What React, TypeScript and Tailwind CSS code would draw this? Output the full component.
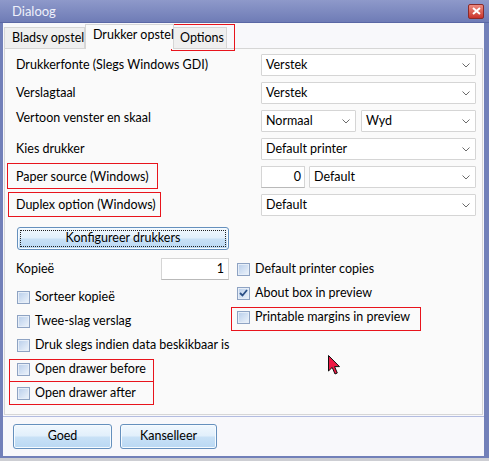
import { type ReactNode } from "react";

function Chevron() {
  return (
    <svg width="8" height="5" viewBox="0 0 8 5">
      <path d="M0.5 0.5 L4 4 L7.5 0.5" fill="none" stroke="#6b6b6b" strokeWidth="1" />
    </svg>
  );
}

function Combo({ value, className = "" }: { value: string; className?: string }) {
  return (
    <div
      className={`flex h-[22px] items-center justify-between rounded-[1px] border border-[#d5d5d5] bg-white pr-[5px] pl-[4px] ${className}`}
    >
      <span>{value}</span>
      <Chevron />
    </div>
  );
}

function Check({ checked = false }: { checked?: boolean }) {
  return (
    <span className="flex h-[13px] w-[13px] shrink-0 items-center justify-center border border-[#8ea3c3] bg-gradient-to-br from-[#b7cdea] to-[#eef4fb] shadow-[inset_0_0_0_1px_#e6eef8]">
      {checked && (
        <svg width="9" height="8" viewBox="0 0 9 8">
          <path d="M1 4 L3.5 6.5 L8 1" fill="none" stroke="#2a4f86" strokeWidth="1.8" />
        </svg>
      )}
    </span>
  );
}

function CheckRow({ label, checked, children }: { label: string; checked?: boolean; children?: ReactNode }) {
  return (
    <div className="relative flex h-[24px] items-center gap-[5px] pl-[1px]">
      <Check checked={checked} />
      <span>{label}</span>
      {children}
    </div>
  );
}

function Mark({ className }: { className: string }) {
  return <div className={`pointer-events-none absolute border border-[#e8141c] ${className}`} />;
}

const btn =
  "flex items-center justify-center rounded-[3px] border border-[#6590bd] bg-[linear-gradient(to_bottom,#f1f8fe_0%,#e1effb_48%,#c9e1f6_52%,#b9d8f3_100%)] shadow-[inset_0_0_0_1px_#f6fbff]";

export default function App() {
  return (
    <div className="relative h-[461px] w-[489px] bg-[#cdced3] font-['Lato',sans-serif] text-[12.5px] leading-none whitespace-nowrap text-black">
      <div className="flex h-[458px] flex-col bg-[#7280b9]">
        <div className="flex h-[23px] items-center justify-between border-b border-[#5a67a5] bg-gradient-to-b from-[#8e99ca] to-[#6f7cb6] pr-[5px] pl-[12px]">
          <span className="text-[13px] text-[#eef0fa]">Dialoog</span>
          <div className="flex h-[15px] w-[16px] items-center justify-center rounded-[2px] border border-[#8a2a2a] bg-gradient-to-b from-[#ec8a80] to-[#c9302a]">
            <svg width="9" height="8" viewBox="0 0 9 8">
              <path d="M1 1 L8 7 M8 1 L1 7" stroke="white" strokeWidth="2" />
            </svg>
          </div>
        </div>

        <div className="mr-[5px] mb-[2px] ml-[3px] flex flex-1 flex-col bg-[#f8f8fb]">
          <div className="flex h-[25px] items-end pl-[1px]">
            <div className="flex h-[21px] w-[81px] items-center border border-b-0 border-[#d6d6d6] bg-[#efefef] pl-[7px]">
              Bladsy opstel
            </div>
            <div className="relative z-10 -mb-px flex h-[25px] w-[89px] items-start border border-b-0 border-[#d6d6d6] bg-[#fafafa] pt-[4px] pl-[7px]">
              Drukker opstel
            </div>
            <div className="relative flex h-[21px] w-[53px] items-center border border-b-0 border-l-0 border-[#d6d6d6] bg-[#efefef] pl-[6px]">
              Options
              <Mark className="-top-[4px] -left-[3px] h-[27px] w-[64px]" />
            </div>
          </div>

          <div className="mr-[1px] ml-[1px] flex h-[367px] flex-col border border-[#d6d6d6] bg-[#fafafa] pt-[5px] pr-[6px] pl-[11px]">
            <div className="flex flex-col gap-[6px]">
              <div className="flex h-[22px] items-center">
                <span className="flex-1">Drukkerfonte (Slegs Windows GDI)</span>
                <Combo value="Verstek" className="w-[215px]" />
              </div>
              <div className="flex h-[22px] items-center">
                <span className="flex-1">Verslagtaal</span>
                <Combo value="Verstek" className="w-[215px]" />
              </div>
              <div className="flex h-[22px] items-start">
                <span className="flex-1 leading-[16px]">Vertoon venster en skaal</span>
                <div className="flex w-[215px] gap-[5px]">
                  <Combo value="Normaal" className="w-[95px]" />
                  <Combo value="Wyd" className="flex-1" />
                </div>
              </div>
              <div className="flex h-[22px] items-center">
                <span className="flex-1">Kies drukker</span>
                <Combo value="Default printer" className="w-[215px]" />
              </div>
              <div className="flex h-[22px] items-center">
                <span className="relative flex-1">
                  Paper source (Windows)
                  <Mark className="-top-[8px] -left-[9px] h-[26px] w-[151px]" />
                </span>
                <div className="flex w-[215px] gap-[4px]">
                  <div className="flex h-[22px] w-[44px] items-center justify-end border border-[#d5d5d5] border-b-[#b9b9b9] bg-white pr-[3px]">
                    0
                  </div>
                  <Combo value="Default" className="flex-1" />
                </div>
              </div>
              <div className="flex h-[22px] items-center">
                <span className="relative flex-1">
                  Duplex option (Windows)
                  <Mark className="-top-[7px] -left-[8px] h-[25px] w-[153px]" />
                </span>
                <Combo value="Default" className="w-[215px]" />
              </div>
            </div>

            <div className={`${btn} mt-[11px] ml-[1px] h-[23px] w-[212px]`}>
              <span className="flex h-[17px] w-[206px] items-center justify-center border border-dotted border-[#222]">
                Konfigureer drukkers
              </span>
            </div>

            <div className="mt-[7px] flex gap-[7px]">
              <div className="flex w-[213px] flex-col">
                <div className="flex h-[24px] items-center justify-between">
                  <span>Kopieë</span>
                  <div className="flex h-[22px] w-[68px] items-center justify-end border border-[#d5d5d5] border-b-[#b9b9b9] bg-white pr-[4px]">
                    1
                  </div>
                </div>
                <div className="mt-[4px] flex flex-col">
                  <CheckRow label="Sorteer kopieë" />
                  <CheckRow label="Twee-slag verslag" />
                  <CheckRow label="Druk slegs indien data beskikbaar is" />
                  <CheckRow label="Open drawer before">
                    <Mark className="top-[2px] -left-[7px] h-[23px] w-[145px]" />
                  </CheckRow>
                  <CheckRow label="Open drawer after">
                    <Mark className="top-0 -left-[7px] h-[24px] w-[145px]" />
                  </CheckRow>
                </div>
              </div>
              <div className="flex flex-col">
                <CheckRow label="Default printer copies" />
                <CheckRow label="About box in preview" checked />
                <CheckRow label="Printable margins in preview">
                  <Mark className="top-[2px] -left-[5px] h-[24px] w-[190px]" />
                </CheckRow>
              </div>
            </div>
          </div>

          <div className="mt-[1px] flex flex-1 gap-[8px] border-t border-[#b3bce0] pt-[7px] pl-[10px]">
            <div className={`${btn} h-[25px] w-[99px]`}>Goed</div>
            <div className={`${btn} h-[25px] w-[97px]`}>Kanselleer</div>
          </div>
        </div>
      </div>

      <svg className="absolute top-[355px] left-[328px]" width="14" height="21" viewBox="0 0 14 21">
        <path d="M0.5 0.5 L0.5 16 L4.2 12.4 L7 19 L9.3 18 L6.6 11.6 L11.5 11.6 Z" fill="#ee1844" stroke="#111" strokeWidth="1" />
      </svg>
    </div>
  );
}
